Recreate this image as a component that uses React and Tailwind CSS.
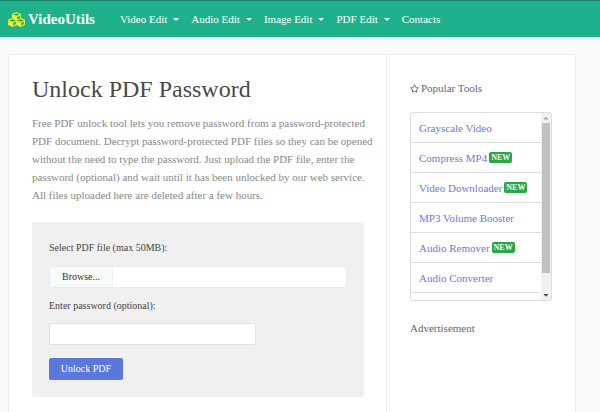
import React, { useRef, useState } from 'react';
import { FaCubes, FaRegStar, FaCaretDown, FaCaretUp } from 'react-icons/fa';

const NAV_MENUS = ['Video Edit', 'Audio Edit', 'Image Edit', 'PDF Edit'];

const POPULAR_TOOLS = [
  { label: 'Grayscale Video' },
  { label: 'Compress MP4', isNew: true },
  { label: 'Video Downloader', isNew: true },
  { label: 'MP3 Volume Booster' },
  { label: 'Audio Remover', isNew: true },
  { label: 'Audio Converter' },
];

function Navbar() {
  return (
    <header className="bg-[#1fb18c] border-t border-[#1a7f68]">
      <nav className="flex items-center h-9 pl-2 text-white">
        <a href="#" className="flex items-center gap-[3px] w-28 text-[15px] leading-[18px] font-bold">
          <FaCubes className="w-[17px] h-[17px] text-[#f0ee17]" />
          VideoUtils
        </a>
        <div className="flex items-center gap-3 text-[11px] leading-[18px]">
          {NAV_MENUS.map((menu) => (
            <button key={menu} type="button" className="flex items-center gap-1.5 whitespace-nowrap">
              {menu}
              <span className="border-x-3 border-t-3 border-x-transparent border-t-white" />
            </button>
          ))}
          <a href="#">Contacts</a>
        </div>
      </nav>
    </header>
  );
}

function UnlockForm() {
  const [fileName, setFileName] = useState('');

  return (
    <form className="mt-[18px] p-[17px] rounded-xs bg-[#f0f0f0] text-[10px] text-[#444]" onSubmit={(e) => e.preventDefault()}>
      <label htmlFor="pdf" className="block">Select PDF file (max 50MB):</label>
      <label className="flex mt-[9px] h-[22px] rounded-sm border border-[#e8eaec] bg-white overflow-hidden leading-5 cursor-pointer">
        <input id="pdf" type="file" accept=".pdf" className="sr-only" onChange={(e) => setFileName(e.target.files[0]?.name ?? '')} />
        <span className="px-3 bg-[#f8fbfb] border-r border-[#f0f2f2] text-[#333]">Browse...</span>
        <span className="px-2 truncate">{fileName}</span>
      </label>

      <label htmlFor="password" className="block mt-[9px]">Enter password (optional):</label>
      <input id="password" type="password" className="block mt-2 w-[207px] h-[22px] px-2 rounded-xs border border-[#e2e2e2] bg-white" />

      <button type="submit" className="block mt-[13px] h-[22px] w-[74px] rounded-xs bg-[#5a78dc] text-white">Unlock PDF</button>
    </form>
  );
}

function PopularTools() {
  const listRef = useRef(null);
  const scroll = (top) => listRef.current.scrollBy({ top });

  return (
    <div className="flex mt-[15px] h-[189px] rounded-xs border border-[#dcdfe1] overflow-hidden">
      <ul ref={listRef} className="flex-1 overflow-y-auto [scrollbar-width:none]">
        {POPULAR_TOOLS.map((tool) => (
          <li key={tool.label} className="flex items-center gap-[2px] h-[30px] pl-2 border-b border-[#dcdfe1] whitespace-nowrap">
            <a href="#" className="text-[#7079d4]">{tool.label}</a>
            {tool.isNew && (
              <span className="px-[2px] rounded-xs bg-[#28a745] text-white text-[8px] leading-[11px] font-bold">NEW</span>
            )}
          </li>
        ))}
      </ul>
      <div className="flex flex-col w-[10px] bg-[#f1f1f1]">
        <button type="button" aria-label="Scroll up" className="flex items-center justify-center h-[10px] text-[#a3a3a3]" onClick={() => scroll(-30)}>
          <FaCaretUp className="w-2 h-2" />
        </button>
        <div className="mx-px h-[150px] bg-[#c1c1c1]" />
        <button type="button" aria-label="Scroll down" className="flex items-center justify-center mt-auto h-[10px] text-[#505050]" onClick={() => scroll(30)}>
          <FaCaretDown className="w-2 h-2" />
        </button>
      </div>
    </div>
  );
}

export default function App() {
  return (
    <div className="min-h-screen bg-[#fafafa] font-['Liberation_Serif',serif] text-[11px] leading-[18px] text-[#666]">
      <Navbar />
      <div className="flex mt-[17px] ml-2 mr-6 min-h-[calc(100vh-54px)] border-x border-t border-[#ececec] bg-white">
        <main className="flex-1 pl-[23px] pr-[22px]">
          <h1 className="mt-[17px] text-[24px] leading-[34px] text-[#4a4a4a]">Unlock PDF Password</h1>
          <p className="mt-2 -mr-3 text-[#888]">
            Free PDF unlock tool lets you remove password from a password-protected PDF document. Decrypt
            password-protected PDF files so they can be opened without the need to type the password. Just upload
            the PDF file, enter the password (optional) and wait until it has been unlocked by our web service.
            <br />
            All files uploaded here are deleted after a few hours.
          </p>
          <UnlockForm />
        </main>
        <aside className="w-[189px] px-[23px] pt-6 border-l border-[#ececec]">
          <h2 className="flex items-center gap-[2px]">
            <FaRegStar className="w-[9px] h-[9px]" />
            Popular Tools
          </h2>
          <PopularTools />
          <p className="mt-[18px]">Advertisement</p>
        </aside>
      </div>
    </div>
  );
}
